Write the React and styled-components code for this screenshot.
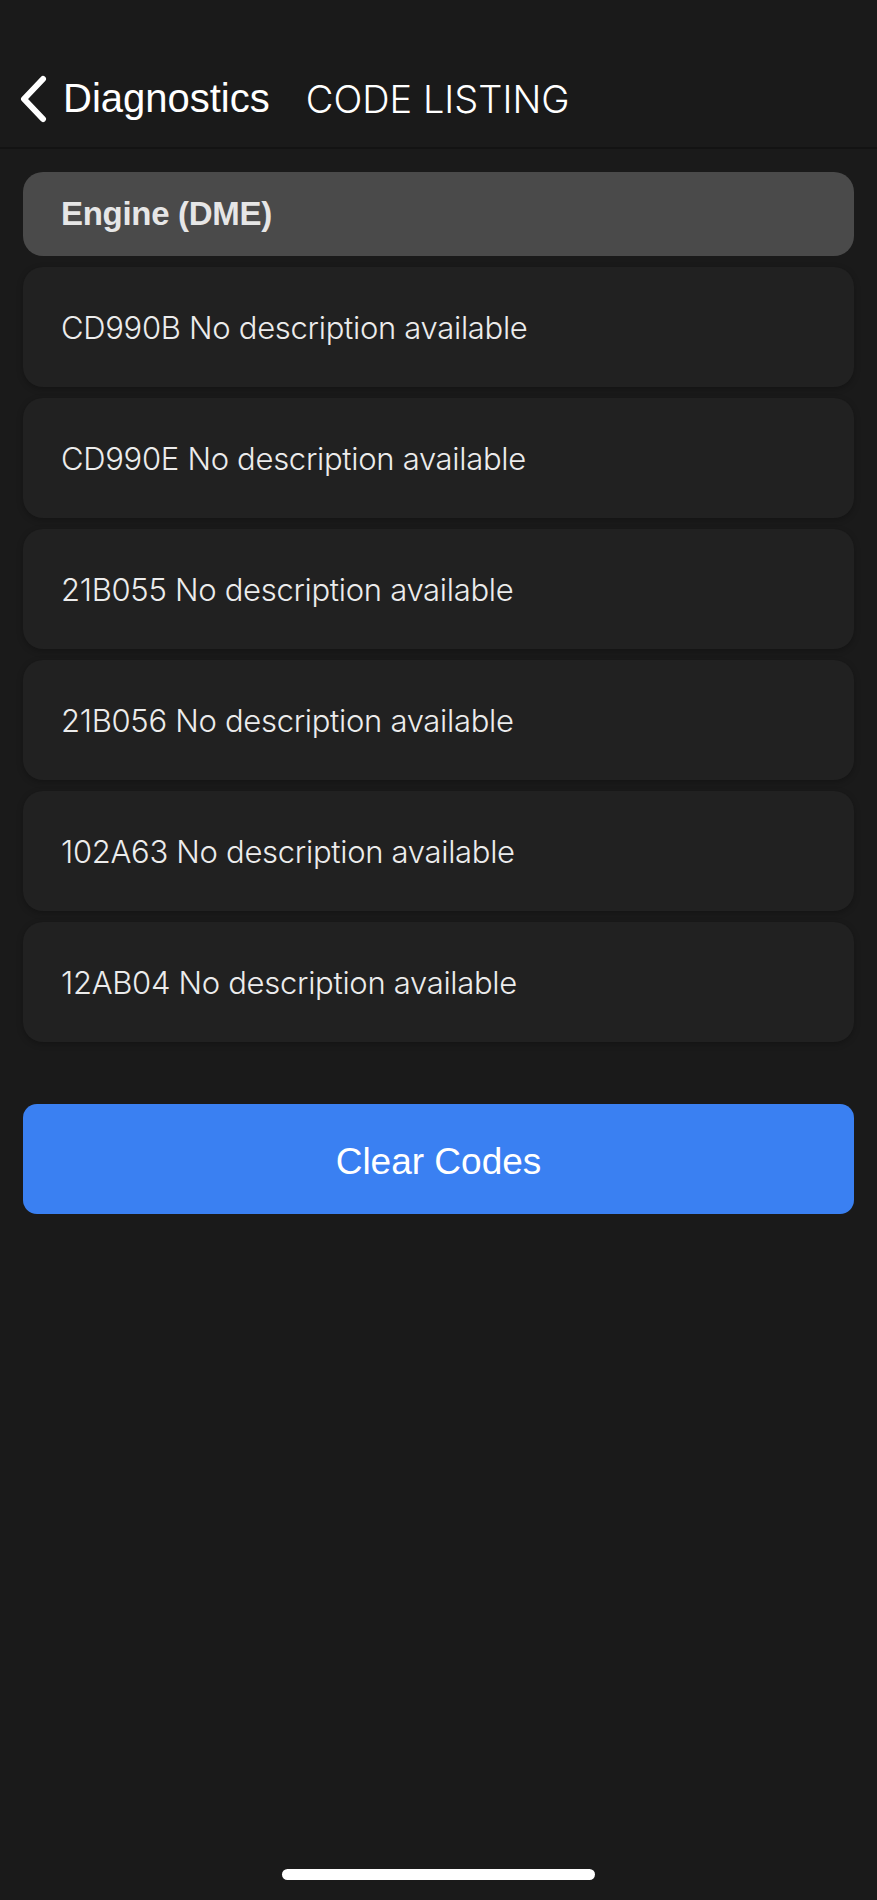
import React from "react";
import styled, { createGlobalStyle } from "styled-components";

const GlobalStyle = createGlobalStyle`
  html, body {
    margin: 0;
    padding: 0;
    background: #1a1a1a;
  }
  * {
    box-sizing: border-box;
  }
`;

const Screen = styled.div`
  min-height: 1900px;
  display: flex;
  flex-direction: column;
  background: #1a1a1a;
  font-family: "Liberation Sans", Arial, sans-serif;
  color: #f2f2f2;
`;

const Header = styled.header`
  height: 149px;
  padding: 50px 0 0 18px;
  display: flex;
  align-items: center;
  border-bottom: 2px solid #131313;
`;

const BackButton = styled.button`
  display: flex;
  align-items: center;
  gap: 15px;
  background: none;
  border: none;
  padding: 0;
  color: #ffffff;
  font-family: inherit;
  font-size: 40px;
  cursor: pointer;
`;

const Title = styled.h1`
  margin: 0 0 0 36px;
  font-family: Inter, "Liberation Sans", sans-serif;
  font-size: 38px;
  font-weight: 300;
  color: #ffffff;
`;

const Content = styled.main`
  padding: 23px 23px 0;
  display: flex;
  flex-direction: column;
  gap: 11px;
`;

const SectionHeader = styled.div`
  height: 84px;
  display: flex;
  align-items: center;
  padding: 0 38px;
  border-radius: 20px;
  background: #4a4a4a;
  color: #e6e6e6;
  font-size: 33px;
  font-weight: bold;
  letter-spacing: -0.3px;
`;

const CodeRow = styled.div`
  height: 120px;
  display: flex;
  align-items: center;
  padding: 0 38px;
  border-radius: 20px;
  background: #212121;
  box-shadow: 0 2px 6px rgba(0, 0, 0, 0.25);
  color: #ececec;
  font-family: Inter, "Liberation Sans", sans-serif;
  font-size: 31px;
  font-weight: 300;
  letter-spacing: -0.3px;
`;

const ClearButton = styled.button`
  margin: 62px 23px 0;
  height: 110px;
  padding-top: 6px;
  border: none;
  border-radius: 14px;
  background: #3a80f2;
  color: #ffffff;
  font-family: inherit;
  font-size: 37px;
  cursor: pointer;
`;

const HomeBar = styled.div`
  margin: auto auto 20px;
  width: 313px;
  height: 11px;
  border-radius: 6px;
  background: #ffffff;
`;

const codes = ["CD990B", "CD990E", "21B055", "21B056", "102A63", "12AB04"];

const Chevron = () => (
  <svg width="30" height="48" viewBox="0 0 30 48" fill="none">
    <path
      d="M25 4 L6 24 L25 44"
      stroke="#ffffff"
      strokeWidth="6"
      strokeLinecap="round"
      strokeLinejoin="round"
    />
  </svg>
);

const App = () => {
  return (
    <Screen>
      <GlobalStyle />
      <Header>
        <BackButton>
          <Chevron />
          Diagnostics
        </BackButton>
        <Title>CODE LISTING</Title>
      </Header>
      <Content>
        <SectionHeader>Engine (DME)</SectionHeader>
        {codes.map((code) => (
          <CodeRow key={code}>{code} No description available</CodeRow>
        ))}
      </Content>
      <ClearButton>Clear Codes</ClearButton>
      <HomeBar />
    </Screen>
  );
};

export default App;
